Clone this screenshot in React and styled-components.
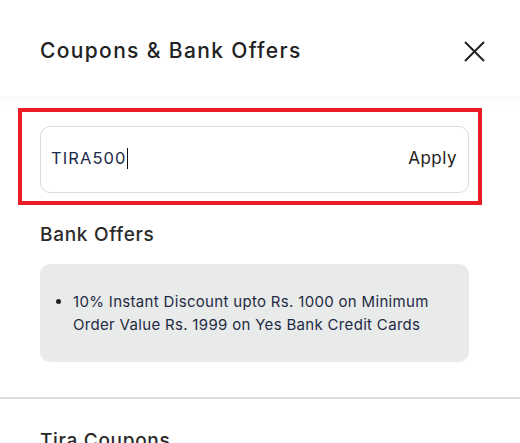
import React from 'react';
import styled, { createGlobalStyle } from 'styled-components';

const GlobalStyle = createGlobalStyle`
  body {
    margin: 0;
    background: #fff;
    font-family: Inter, "Open Sans", "Liberation Sans", sans-serif;
    color: #222;
  }
`;

const App = () => {
  return (
    <>
      <GlobalStyle />
      <Panel>
        <Header>
          <Title>Coupons &amp; Bank Offers</Title>
          <CloseButton aria-label="close">
            <svg width="21" height="21" viewBox="0 0 21 21" fill="none">
              <path d="M1 1L20 20M20 1L1 20" stroke="#222" strokeWidth="2" />
            </svg>
          </CloseButton>
        </Header>

        <CouponSection>
          <Highlight />
          <InputBox>
            <CodeText>TIRA500</CodeText>
            <Caret />
            <ApplyButton>Apply</ApplyButton>
          </InputBox>
        </CouponSection>

        <Section>
          <SectionTitle>Bank Offers</SectionTitle>
          <OfferCard>
            <OfferList>
              <li>10% Instant Discount upto Rs. 1000 on Minimum Order Value Rs. 1999 on Yes Bank Credit Cards</li>
            </OfferList>
          </OfferCard>
        </Section>

        <Divider />

        <Section>
          <SectionTitle>Tira Coupons</SectionTitle>
        </Section>
      </Panel>
    </>
  );
};

export default App;

const Panel = styled.div`
  width: 520px;
  height: 443px;
  overflow: hidden;
  display: flex;
  flex-direction: column;
`;

const Header = styled.div`
  height: 96px;
  box-sizing: border-box;
  flex-shrink: 0;
  padding: 6px 35px 0 40px;
  display: flex;
  align-items: center;
  justify-content: space-between;
  background: #fff;
  box-shadow: 0 4px 10px rgba(0, 0, 0, 0.035);
  position: relative;
  z-index: 1;
`;

const Title = styled.div`
  font-size: 21px;
  font-weight: 500;
  letter-spacing: 1.35px;
  color: #222;
  padding-bottom: 2px;
`;

const CloseButton = styled.button`
  border: 0;
  background: none;
  padding: 0;
  width: 21px;
  height: 21px;
  cursor: pointer;
`;

const CouponSection = styled.div`
  position: relative;
  padding: 30px 51px 0 40px;
`;

const Highlight = styled.div`
  position: absolute;
  left: 18px;
  top: 12px;
  width: 464px;
  height: 97px;
  box-sizing: border-box;
  border: 4px solid #ed1c24;
  pointer-events: none;
`;

const InputBox = styled.div`
  height: 67px;
  box-sizing: border-box;
  border: 1px solid #dcdcdc;
  border-radius: 10px;
  display: flex;
  align-items: center;
  padding: 0 11px 3px 10px;
`;

const CodeText = styled.span`
  font-size: 16.5px;
  letter-spacing: 1.1px;
  color: #1c2a4a;
`;

const Caret = styled.span`
  width: 1px;
  height: 21px;
  background: #111;
  margin-right: auto;
`;

const ApplyButton = styled.button`
  border: 0;
  background: none;
  padding: 0;
  font: inherit;
  font-size: 17px;
  letter-spacing: 0.5px;
  color: #222;
  cursor: pointer;
`;

const Section = styled.div`
  padding: 0 51px 0 40px;
`;

const SectionTitle = styled.div`
  font-size: 19px;
  font-weight: 500;
  letter-spacing: 0.7px;
  color: #2a2a2a;
  margin-top: 30px;
`;

const OfferCard = styled.div`
  margin-top: 18px;
  background: #e8ebea;
  border-radius: 10px;
  padding: 26px 20px 26px 14px;
`;

const OfferList = styled.ul`
  margin: 0;
  padding-left: 19px;
  font-size: 15px;
  letter-spacing: 0.32px;
  line-height: 23px;
  color: #1f2a44;

  li::marker {
    color: #222;
  }
`;

const Divider = styled.div`
  height: 2px;
  background: #dedede;
  margin-top: 35px;
  flex-shrink: 0;
`;
